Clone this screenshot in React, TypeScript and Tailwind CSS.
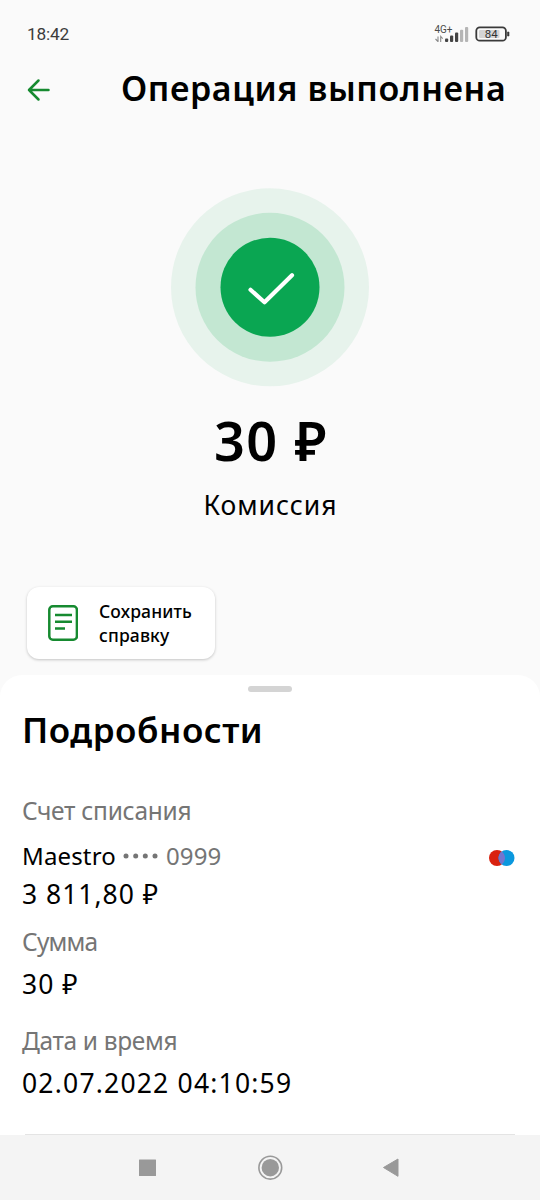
import React from "react";

function StatusBar() {
  return (
    <div className="flex h-[67px] items-center justify-between pl-[27px] pr-[29px]">
      <span className="font-[Roboto] text-[17.3px] leading-6 tracking-[-0.2px] text-[#3c3c3c]">18:42</span>
      <svg width="77" height="22" viewBox="434 22 77 22" className="block">
        <text x="434.5" y="31.8" fontSize="10" fontFamily="Roboto" fill="#4a4a4a" textLength="18" lengthAdjust="spacingAndGlyphs">4G+</text>
        <g stroke="#8a8a8a" strokeWidth="1.1" fill="none">
          <path d="M438 35.5v5.5M438 40.5l-2.500-2.500M440.700 41v-5.500l2 2.200" />
        </g>
        <rect x="445" y="37.500" width="3.200" height="3.500" rx="1" fill="#444" />
        <rect x="450" y="34.500" width="3.200" height="6.500" rx="1" fill="#444" />
        <rect x="455" y="31.500" width="3.200" height="9.500" rx="1" fill="#444" />
        <rect x="460" y="28.800" width="3.200" height="12.200" rx="1" fill="#b5b5b5" />
        <rect x="465" y="26" width="3.200" height="15" rx="1" fill="#b5b5b5" />
        <rect x="476.300" y="26.300" width="29.600" height="13.400" rx="3.500" fill="#fafafa" stroke="#3a3a3a" strokeWidth="1.800" />
        <rect x="479" y="29" width="20.500" height="8" rx="1" fill="#d5d5d5" />
        <path d="M507.500 31h1.500v4h-1.500z" fill="#3a3a3a" stroke="#3a3a3a" strokeWidth="0.600" />
        <text x="491.200" y="37.200" fontSize="11.500" fontFamily="Roboto" fill="#333" textAnchor="middle">84</text>
      </svg>
    </div>
  );
}

function SuccessMark() {
  return (
    <svg width="198" height="199" viewBox="0 -0.3 198 199" className="mx-auto mt-[80px] block">
      <circle cx="99" cy="99" r="99" fill="#e7f3ec" />
      <circle cx="99" cy="99" r="74.500" fill="#c3e7d2" />
      <circle cx="99" cy="99" r="49.500" fill="#0aa652" />
      <path d="M79.500 101.500 93.500 114 121 87" fill="none" stroke="#fff" strokeWidth="4.200" strokeLinecap="round" strokeLinejoin="round" />
    </svg>
  );
}

const label = "h-10 whitespace-nowrap text-[24.5px] leading-10 text-[#757575]";
const value = "h-10 whitespace-nowrap text-[26.5px] leading-10";

export default function App() {
  return (
    <div className="flex h-[1200px] w-[540px] flex-col overflow-hidden bg-[#fafafa] font-['Noto_Sans',sans-serif] text-black">
      <StatusBar />
      <header className="flex h-[41px] items-center pl-[27px]">
        <svg width="24" height="24" viewBox="0 0 24 24" className="mt-[4px] block" fill="none" stroke="#168a30" strokeWidth="2.500" strokeLinecap="round" strokeLinejoin="round">
          <path d="M21.500 12H2M11.500 2.500 2 12l9.500 9.500" />
        </svg>
        <h1 className="ml-[70px] whitespace-nowrap text-[34px] leading-10 font-semibold tracking-[0.6px]">Операция выполнена</h1>
      </header>
      <SuccessMark />
      <div className="mt-[23px] h-[60px] pl-[2px] text-center text-[54px] leading-[60px] font-semibold tracking-[1.6px]">30 ₽</div>
      <div className="mt-[15px] h-10 pl-px text-center text-[26.5px] leading-10 tracking-[1px]">Комиссия</div>
      <button className="mt-[62px] ml-[27px] flex h-[72px] w-[188px] items-center rounded-xl bg-white pl-[21px] text-left shadow-[0_1px_3px_rgba(0,0,0,0.22)]">
        <svg width="30" height="36" viewBox="0 0 30 36" className="block" fill="none" stroke="#168a30" strokeWidth="2.500" strokeLinecap="round">
          <rect x="1.300" y="1.300" width="27.600" height="33.400" rx="3.500" />
          <path d="M7 10h17M7 16.700h17M7 23.500h10" strokeLinecap="butt" />
        </svg>
        <span className="ml-[21px] text-[17.5px] leading-[24.5px] font-medium tracking-[0.15px]">Сохранить<br />справку</span>
      </button>
      <section className="mt-4 flex h-[460px] flex-col rounded-t-[22px] bg-white px-[22px]">
        <div className="mx-auto mt-[11px] h-[6px] w-[44px] shrink-0 rounded-full bg-[#d4d4d4]" />
        <h2 className="mt-[18px] h-10 whitespace-nowrap text-[35px] leading-10 font-semibold tracking-[0.5px]">Подробности</h2>
        <div className={"mt-[41px] tracking-[-0.27px] " + label}>Счет списания</div>
        <div className="mt-[5px] flex h-10 items-center justify-between">
          <div className="flex items-center whitespace-nowrap text-[24px] leading-10 tracking-[0.15px]">
            <span>Maestro</span>
            <svg width="35" height="6" viewBox="0 0 35 6" className="ml-[7px]" fill="#757575">
              <circle cx="3" cy="3" r="2.500" /><circle cx="12.700" cy="3" r="2.500" /><circle cx="22.300" cy="3" r="2.500" /><circle cx="32" cy="3" r="2.500" />
            </svg>
            <span className="ml-[8px] text-[#757575]">0999</span>
          </div>
          <svg width="26" height="16" viewBox="0 0 26 16" className="mr-[3px] mt-[4px]">
            <circle cx="8" cy="8" r="8" fill="#d9220f" />
            <circle cx="17.500" cy="8" r="8" fill="#0b98de" />
            <path d="M12.750 1.560a8 8 0 0 1 0 12.880a8 8 0 0 1 0-12.880z" fill="#7375cf" />
          </svg>
        </div>
        <div className={"-mt-[2px] tracking-[1px] " + value}>3 811,80 ₽</div>
        <div className={"mt-[8px] tracking-[-0.8px] " + label}>Сумма</div>
        <div className={"mt-[2px] tracking-[1px] " + value}>30 ₽</div>
        <div className={"mt-[17px] tracking-[-0.35px] " + label}>Дата и время</div>
        <div className={"mt-[2px] tracking-[1.2px] " + value}>02.07.2022 04:10:59</div>
        <div className="mx-[3px] mt-auto h-px shrink-0 bg-[#e4e4e4]" />
      </section>
      <nav className="h-[65px] bg-[#f4f4f4]">
        <svg width="540" height="65" viewBox="0 1135 540 65" className="block">
          <rect x="139" y="1159.500" width="17" height="16.500" rx="0.500" fill="#999" />
          <circle cx="270.300" cy="1167.700" r="11.400" fill="none" stroke="#999" strokeWidth="1.600" />
          <circle cx="270.300" cy="1167.700" r="8.700" fill="#999" />
          <path d="M383.500 1167.500 398 1159v17.300z" fill="#999" stroke="#999" strokeWidth="1" strokeLinejoin="round" />
        </svg>
      </nav>
    </div>
  );
}
